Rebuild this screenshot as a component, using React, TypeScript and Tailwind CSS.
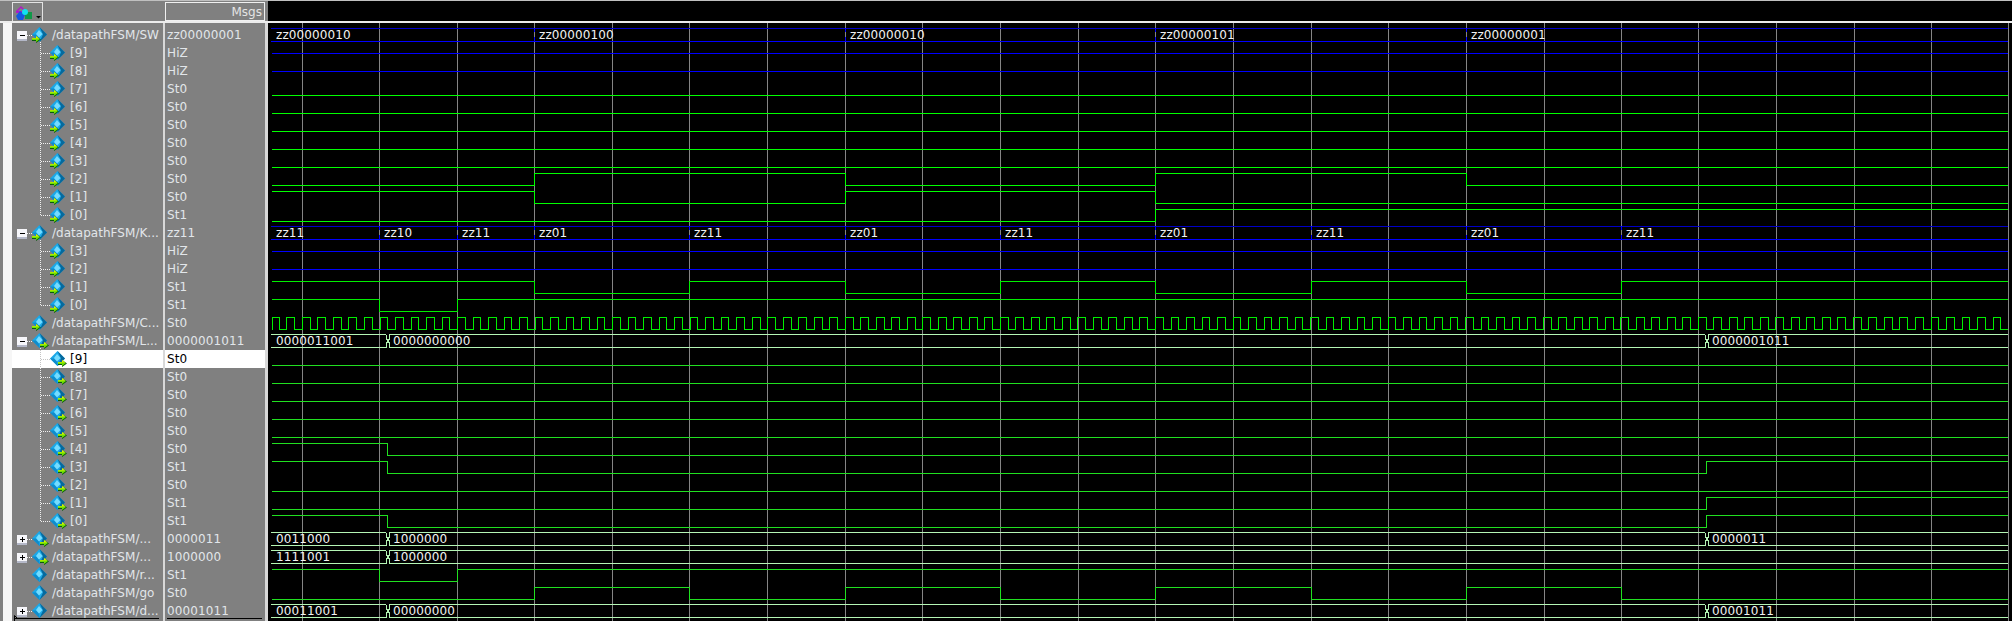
type Arrow = 'in' | 'out' | null;

interface Row {
  name: string;
  value: string;
  child?: boolean;
  last?: boolean;
  toggle?: 'minus' | 'plus';
  arrow?: Arrow;
  selected?: boolean;
}

type Change = [number, string];

const ROW_H = 18;
const FIRST_ROW = 26;
const WAVE_END = 2008;

const bits = (vals: string[], names: number[], arrow: Arrow): Row[] =>
  vals.map((value, i) => ({
    name: `[${names[i]}]`,
    value,
    child: true,
    arrow,
    last: i === vals.length - 1,
  }));

const rows: Row[] = [
  { name: '/datapathFSM/SW', value: 'zz00000001', toggle: 'minus', arrow: 'in' },
  ...bits(['HiZ', 'HiZ', 'St0', 'St0', 'St0', 'St0', 'St0', 'St0', 'St0', 'St1'], [9, 8, 7, 6, 5, 4, 3, 2, 1, 0], 'in'),
  { name: '/datapathFSM/K...', value: 'zz11', toggle: 'minus', arrow: 'in' },
  ...bits(['HiZ', 'HiZ', 'St1', 'St1'], [3, 2, 1, 0], 'in'),
  { name: '/datapathFSM/C...', value: 'St0', arrow: 'in' },
  { name: '/datapathFSM/L...', value: '0000001011', toggle: 'minus', arrow: 'out' },
  ...bits(['St0', 'St0', 'St0', 'St0', 'St0', 'St0', 'St1', 'St0', 'St1', 'St1'], [9, 8, 7, 6, 5, 4, 3, 2, 1, 0], 'out'),
  { name: '/datapathFSM/...', value: '0000011', toggle: 'plus', arrow: 'out' },
  { name: '/datapathFSM/...', value: '1000000', toggle: 'plus', arrow: 'out' },
  { name: '/datapathFSM/r...', value: 'St1' },
  { name: '/datapathFSM/go', value: 'St0' },
  { name: '/datapathFSM/d...', value: '00001011', toggle: 'plus' },
];
rows[18].selected = true;

const GRID = [302, 379, 457, 534, 612, 689, 767, 845, 922, 1000, 1078, 1155, 1233, 1311, 1388, 1466, 1544, 1621, 1698, 1776, 1854, 1931, 2008];

const SW: Change[] = [
  [272, 'zz00000010'],
  [534, 'zz00000100'],
  [845, 'zz00000010'],
  [1155, 'zz00000101'],
  [1466, 'zz00000001'],
];
const KEY: Change[] = [
  [272, 'zz11'],
  [379, 'zz10'],
  [457, 'zz11'],
  [534, 'zz01'],
  [689, 'zz11'],
  [845, 'zz01'],
  [1000, 'zz11'],
  [1155, 'zz01'],
  [1311, 'zz11'],
  [1466, 'zz01'],
  [1621, 'zz11'],
];
const LEDR: Change[] = [[272, '0000011001'], [387, '0000000000'], [1706, '0000001011']];
const HEX0: Change[] = [[272, '0011000'], [387, '1000000'], [1706, '0000011']];
const HEX1: Change[] = [[272, '1111001'], [387, '1000000']];
const DATA: Change[] = [[272, '00011001'], [387, '00000000'], [1706, '00001011']];
const RST: Change[] = [[272, '1'], [379, '0'], [457, '1']];
const GO: Change[] = [[272, '0'], [534, '1'], [689, '0'], [845, '1'], [1000, '0'], [1155, '1'], [1311, '0'], [1466, '1'], [1621, '0']];

const topOf = (row: number) => FIRST_ROW + row * ROW_H;

function SignalIcon({ x, arrow }: { x: number; arrow?: Arrow }) {
  return (
    <g transform={`translate(${x} 1)`}>
      <polygon points="7.5,0 15,7.5 7.5,15 0,7.5" fill="#1aa8e8" />
      <polygon points="7.5,0 15,7.5 7.5,15 11,7.5" fill="#07699c" />
      <polygon points="0,7.5 7.5,15 7,10.5 4,7.5" fill="#0f8ccc" />
      <polygon points="7,3 10.5,7 7,10.5 4,7" fill="#74dcff" />
      {arrow === 'in' && (
        <g>
          <polygon points="0,11 4,11 4,9 9,12.5 4,16 4,14 0,14" fill="#0b5a10" />
          <polygon points="0,11 4,11 4,9 8,12 4,15 4,13 0,13" fill="#6fe000" />
          <polygon points="0,11 4,11 4,9 7,11.5 0,11.5" fill="#e0f400" />
        </g>
      )}
      {arrow === 'out' && (
        <g>
          <polygon points="8,11 12,11 12,9 17,12.5 12,16 12,14 8,14" fill="#0b5a10" />
          <polygon points="8,11 12,11 12,9 16,12 12,15 12,13 8,13" fill="#6fe000" />
          <polygon points="8,11 12,11 12,9 15,11.5 8,11.5" fill="#e0f400" />
        </g>
      )}
    </g>
  );
}

function Toggle({ kind }: { kind: 'minus' | 'plus' }) {
  return (
    <g shapeRendering="crispEdges">
      <rect x="17" y="5" width="10" height="10" fill="#f6f6fa" />
      <rect x="17" y="13" width="10" height="2" fill="#b4b8c8" />
      <rect x="20" y="9" width="5" height="1" fill="#000000" />
      {kind === 'plus' && <rect x="22" y="7" width="1" height="5" fill="#000000" />}
    </g>
  );
}

function Gutter({ row }: { row: Row }) {
  const width = row.child ? 58 : 40;
  const dots = row.selected ? '#c4c4c4' : '#f0f0f0';
  const opened = row.toggle === 'minus';
  return (
    <svg width={width} height={18} viewBox={`12 0 ${width} 18`} className="shrink-0">
      {row.child && (
        <g stroke={dots} strokeDasharray="1 1" shapeRendering="crispEdges">
          <line x1="40.5" y1="0" x2="40.5" y2={row.last ? 10 : 18} />
          <line x1="41" y1="9.5" x2="50" y2="9.5" />
        </g>
      )}
      {opened && <line x1="40.5" y1="16" x2="40.5" y2="18" stroke={dots} strokeDasharray="1 1" shapeRendering="crispEdges" />}
      {row.toggle && <line x1="27" y1="9.5" x2="33" y2="9.5" stroke={dots} strokeDasharray="1 1" shapeRendering="crispEdges" />}
      {row.toggle && <Toggle kind={row.toggle} />}
      <SignalIcon x={row.child ? 50 : 32} arrow={row.arrow} />
    </svg>
  );
}

function stepPath(changes: Change[], charAt: (v: string) => string, top: number) {
  let d = '';
  let prev = '';
  changes.forEach(([x, v], i) => {
    const c = charAt(v);
    const y = (c === '1' ? top + 2 : c === 'z' ? top + 8 : top + 14) + 0.5;
    d += i === 0 ? `M${x} ${y}` : c === prev ? '' : `H${x + 0.5}V${y}`;
    prev = c;
  });
  return d + `H${WAVE_END}`;
}

function BitWave({ changes, index, row, color = '#00ff00' }: { changes: Change[]; index: number; row: number; color?: string }) {
  const isZ = changes[0][1][index] === 'z';
  return (
    <path
      d={stepPath(changes, (v) => v[index], topOf(row))}
      fill="none"
      stroke={isZ ? '#0000ff' : color}
      strokeWidth={1}
    />
  );
}

function BusWave({ changes, row, color, kind }: { changes: Change[]; row: number; color: string; kind: 'blue' | 'green' }) {
  const top = topOf(row);
  const y1 = top + 1.5;
  const y2 = top + 14.5;
  const segments = changes.map(([x], i) => {
    const next = i + 1 < changes.length ? changes[i + 1][0] : WAVE_END;
    return { from: i === 0 ? 271 : kind === 'green' ? x + 3 : x, to: kind === 'green' && next !== WAVE_END ? next - 1 : next };
  });
  return (
    <g>
      {segments.map((s, i) => (
        <g key={i} stroke={color} fill="none">
          <line x1={s.from} y1={y1} x2={s.to} y2={y1} stroke={kind === 'blue' ? '#0000c8' : color} />
          <line x1={s.from} y1={y2} x2={s.to} y2={y2} />
        </g>
      ))}
      {changes.slice(1).map(([x], i) =>
        kind === 'blue' ? (
          <g key={i} stroke={color}>
            <line x1={x + 0.5} y1={top + 1} x2={x + 0.5} y2={top + 5} />
            <line x1={x + 0.5} y1={top + 10} x2={x + 0.5} y2={top + 15} />
          </g>
        ) : (
          <g key={i} stroke={color} fill="none">
            <path d={`M${x - 1} ${y1}V${top + 6.5}H${x + 0.5}V${top + 9.5}H${x - 1}V${y2}`} />
            <path d={`M${x + 3} ${y1}H${x + 2.5}V${top + 6.5}H${x + 1.5}V${top + 9.5}H${x + 2.5}V${y2}H${x + 3}`} />
          </g>
        ),
      )}
      {changes.map(([x, v], i) => (
        <text
          key={i}
          x={i === 0 ? 276 : kind === 'green' ? x + 6 : x + 5}
          y={top + 12}
          fontSize={12}
          className="fill-[#f2f2f2] tracking-[0.12px]"
        >
          {v}
        </text>
      ))}
    </g>
  );
}

function clockPath(top: number) {
  const hi = top + 2.5;
  const lo = top + 14.5;
  let d = `M272 ${lo}V${hi}`;
  for (let n = -7; n < 112; n++) {
    const rise = 380 + 15.51 * n;
    const fall = Math.floor(rise + 7.76) + 0.5;
    const nextRise = Math.floor(rise + 15.51) + 0.5;
    if (fall >= WAVE_END) break;
    d += `H${fall}V${lo}`;
    if (nextRise >= WAVE_END) {
      d += `H${WAVE_END}`;
      break;
    }
    d += `H${nextRise}V${hi}`;
  }
  return d;
}

function Waves() {
  const swBits = Array.from({ length: 10 }, (_, i) => i);
  const keyBits = [0, 1, 2, 3];
  return (
    <svg width={1744} height={599} viewBox="268 22 1744 599" className="block shrink-0 bg-black">
      <g shapeRendering="crispEdges">
        {GRID.map((x) => (
          <line key={x} x1={x + 0.5} y1={22} x2={x + 0.5} y2={621} stroke="#858585" />
        ))}
        <BusWave changes={SW} row={0} color="#0000ff" kind="blue" />
        {swBits.map((i) => (
          <BitWave key={i} changes={SW} index={i} row={i + 1} />
        ))}
        <BusWave changes={KEY} row={11} color="#0000ff" kind="blue" />
        {keyBits.map((i) => (
          <BitWave key={i} changes={KEY} index={i} row={i + 12} color="#00ee00" />
        ))}
        <path d={clockPath(topOf(16))} fill="none" stroke="#00ee00" />
        <BusWave changes={LEDR} row={17} color="#b4f5b4" kind="green" />
        {swBits.map((i) => (
          <BitWave key={i} changes={LEDR} index={i} row={i + 18} color="#20e020" />
        ))}
        <BusWave changes={HEX0} row={28} color="#b4f5b4" kind="green" />
        <BusWave changes={HEX1} row={29} color="#b4f5b4" kind="green" />
        <BitWave changes={RST} index={0} row={30} color="#20e020" />
        <BitWave changes={GO} index={0} row={31} color="#20e020" />
        <BusWave changes={DATA} row={32} color="#b4f5b4" kind="green" />
      </g>
    </svg>
  );
}

function WaveLogo() {
  return (
    <svg width={31} height={19} viewBox="12 2 31 19" className="block">
      <polygon points="16,11 21,6 25,10 25,13 16,13" fill="#b018c8" />
      <polygon points="18,11 21,8 23,10 23,11" fill="#808080" />
      <rect x="25" y="12" width="7" height="7" fill="#109848" />
      <polygon points="20,11 25,15 23,20 18,20 16,16" fill="#1458e0" />
      <circle cx="25" cy="12" r="3" fill="#10e0f0" />
      <polygon points="36,16 41,16 38.5,18.5" fill="#000000" />
    </svg>
  );
}

export default function App() {
  return (
    <div className="flex h-[621px] w-[2012px] flex-col overflow-hidden bg-[#808080] font-['DejaVu_Sans',sans-serif] text-[12px] leading-none">
      {/* Header */}
      <div className="flex h-[23px] shrink-0 border-t border-t-[#c0c0c0] border-b-2 border-b-[#ececec]">
        <div className="w-[165px] shrink-0 pl-[12px]">
          <div className="mt-px h-[19px] w-[31px] border-x border-t border-[#e4e4e4]">
            <div className="-mt-px -ml-px">
              <WaveLogo />
            </div>
          </div>
        </div>
        <div className="mt-px flex w-[100px] shrink-0 items-center justify-end border border-[#f0f0f0] pr-[2px] text-[#e4e4e4]">
          Msgs
        </div>
        <div className="w-[3px] shrink-0" />
        <div className="flex-1 bg-black" />
      </div>

      <div className="relative flex min-h-0 flex-1">
        {/* Left edge */}
        <div className="w-[3px] shrink-0" />
        <div className="w-[9px] shrink-0 bg-[#f6f6f6]" />

        {/* Signal names */}
        <div className="flex w-[151px] shrink-0 flex-col pt-[3px]">
          {rows.map((row, i) => (
            <div key={i} className={`flex h-[18px] shrink-0 items-center tracking-[0.03px] ${row.selected ? 'bg-white text-black' : 'text-[#e2e6ea]'}`}>
              <Gutter row={row} />
              <span className="whitespace-nowrap">{row.name}</span>
            </div>
          ))}
          <div className="-mt-[2px] ml-[2px] mr-[4px] h-px shrink-0 bg-black" />
        </div>
        <div className="w-[2px] shrink-0 bg-[#d8d8d8]" />

        {/* Values */}
        <div className="flex w-[100px] shrink-0 flex-col pt-[3px]">
          {rows.map((row, i) => (
            <div key={i} className={`flex h-[18px] shrink-0 items-center pl-[2px] tracking-[0.12px] ${row.selected ? 'bg-white text-black' : 'text-[#e2e6ea]'}`}>
              {row.value}
            </div>
          ))}
          <div className="-mt-[2px] ml-[2px] mr-[3px] h-px shrink-0 bg-black" />
        </div>
        <div className="w-[3px] shrink-0 bg-[#d8d8d8]" />

        <Waves />

        {/* Mouse pointer caught in the capture */}
        <svg width={6} height={6} viewBox="0 0 6 6" className="absolute left-[14px] bottom-0">
          <path d="M0.5 0.5V6M0.5 0.5L3.5 3.5H1.5" fill="none" stroke="#000000" />
        </svg>
      </div>
    </div>
  );
}
